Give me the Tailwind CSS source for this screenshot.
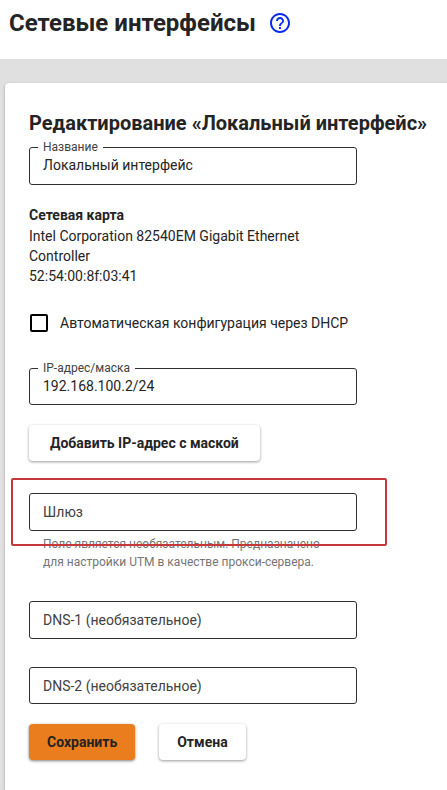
<!DOCTYPE html>
<html lang="ru">
<head>
<meta charset="utf-8">
<meta name="viewport" content="width=device-width, initial-scale=1">
<title>Сетевые интерфейсы</title>
<script src="https://cdn.jsdelivr.net/npm/@tailwindcss/browser@4"></script>
</head>
<body class="flex min-h-screen flex-col overflow-x-hidden bg-[#e0e0e0] font-[Roboto,sans-serif] text-sm text-[#242424]">
<header class="flex items-start gap-3 bg-white px-[9px] pt-[7px] pb-5">
  <h1 class="text-2xl font-bold">Сетевые интерфейсы</h1>
  <a href="#help" aria-label="Справка" class="pt-1 text-[#0a2bee]">
    <svg class="size-6" viewBox="0 0 24 24" fill="currentColor" aria-hidden="true"><path d="M11 18h2v-2h-2v2zm1-16C6.480 2 2 6.480 2 12s4.480 10 10 10 10-4.480 10-10S17.520 2 12 2zm0 18c-4.410 0-8-3.590-8-8s3.590-8 8-8 8 3.590 8 8-3.590 8-8 8zm0-14c-2.210 0-4 1.790-4 4h2c0-1.100.9-2 2-2s2 .9 2 2c0 2-3 1.750-3 5h2c0-2.250 3-2.500 3-5 0-2.210-1.790-4-4-4z"/></svg>
  </a>
</header>
<main class="flex grow flex-col pt-6 pl-[5px]">
  <form class="flex grow flex-col rounded-tl bg-white px-6 pt-6 pb-7 shadow-[0_1px_3px_rgba(0,0,0,0.3)]">
    <h2 class="text-xl leading-8 font-bold whitespace-nowrap">Редактирование «Локальный интерфейс»</h2>

    <div class="relative mt-2 w-full max-w-[328px]">
      <label for="name" class="absolute -top-2 left-[9px] bg-white px-[5px] text-xs text-[#424242]">Название</label>
      <input id="name" type="text" value="Локальный интерфейс" class="block h-[38px] w-full rounded-[3px] border border-[#303030] px-[13px] pb-0.5">
    </div>

    <section class="mt-5 max-w-[328px]">
      <h3 class="mb-px font-bold">Сетевая карта</h3>
      <p>Intel Corporation 82540EM Gigabit Ethernet Controller</p>
      <p>52:54:00:8f:03:41</p>
    </section>

    <label class="mt-[27px] flex items-center gap-3 pl-px">
      <input type="checkbox" class="size-[18px] appearance-none rounded-xs border-2 border-black">
      <span>Автоматическая конфигурация через DHCP</span>
    </label>

    <div class="relative mt-[35px] w-full max-w-[328px]">
      <label for="ip" class="absolute -top-2 left-[9px] bg-white px-[5px] text-xs text-[#424242]">IP-адрес/маска</label>
      <input id="ip" type="text" value="192.168.100.2/24" class="block h-[37px] w-full rounded-[3px] border border-[#303030] px-[13px] pb-0.5">
    </div>

    <button type="button" class="mt-5 h-9 self-start rounded px-[21px] font-bold shadow-[0_1px_3px_rgba(0,0,0,0.4)]">Добавить IP-адрес с маской</button>

    <div class="relative mt-8 w-full max-w-[328px]">
      <input id="gateway" type="text" placeholder="Шлюз" aria-label="Шлюз" aria-describedby="gateway-hint" class="block h-[38px] w-full rounded-[3px] border border-[#303030] px-[13px] placeholder:text-[#424242]">
      <p id="gateway-hint" class="px-[14px] pt-1 text-xs leading-[18px] text-[#757575]">Поле является необязательным. Предназначено для настройки UTM в качестве прокси-сервера.</p>
      <div class="pointer-events-none absolute -top-[15px] -right-[30px] -left-[18px] h-[68px] rounded-xs border-2 border-[#c4383b]"></div>
    </div>

    <input type="text" placeholder="DNS-1 (необязательное)" aria-label="DNS-1 (необязательное)" class="mt-[30px] block h-[38px] w-full max-w-[328px] rounded-[3px] border border-[#303030] px-[13px] placeholder:text-[#424242]">
    <input type="text" placeholder="DNS-2 (необязательное)" aria-label="DNS-2 (необязательное)" class="mt-7 block h-[37px] w-full max-w-[328px] rounded-[3px] border border-[#303030] px-[13px] placeholder:text-[#424242]">

    <div class="mt-5 flex gap-6">
      <button type="submit" class="h-9 rounded bg-[#ea7d1e] px-[18px] font-bold shadow-[0_1px_3px_rgba(0,0,0,0.5)]">Сохранить</button>
      <button type="button" class="h-9 rounded px-[18px] font-bold shadow-[0_1px_3px_rgba(0,0,0,0.4)]">Отмена</button>
    </div>
  </form>
</main>
</body>
</html>
